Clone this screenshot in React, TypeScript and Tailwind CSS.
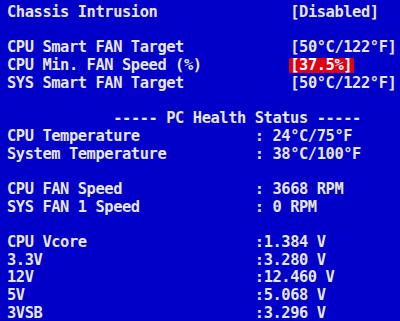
import React from 'react';

type Row =
  | { kind: 'blank' }
  | { kind: 'option'; label: string; value: string; active?: boolean }
  | { kind: 'reading'; label: string; value: string }
  | { kind: 'header'; text: string };

const rows: Row[] = [
  { kind: 'option', label: 'Chassis Intrusion', value: '[Disabled]' },
  { kind: 'blank' },
  { kind: 'option', label: 'CPU Smart FAN Target', value: '[50°C/122°F]' },
  { kind: 'option', label: 'CPU Min. FAN Speed (%)', value: '[37.5%]', active: true },
  { kind: 'option', label: 'SYS Smart FAN Target', value: '[50°C/122°F]' },
  { kind: 'blank' },
  { kind: 'header', text: '----- PC Health Status -----' },
  { kind: 'reading', label: 'CPU Temperature', value: ': 24°C/75°F' },
  { kind: 'reading', label: 'System Temperature', value: ': 38°C/100°F' },
  { kind: 'blank' },
  { kind: 'reading', label: 'CPU FAN Speed', value: ': 3668 RPM' },
  { kind: 'reading', label: 'SYS FAN 1 Speed', value: ': 0 RPM' },
  { kind: 'blank' },
  { kind: 'reading', label: 'CPU Vcore', value: ':1.384 V' },
  { kind: 'reading', label: '3.3V', value: ':3.280 V' },
  { kind: 'reading', label: '12V', value: ':12.460 V' },
  { kind: 'reading', label: '5V', value: ':5.068 V' },
  { kind: 'reading', label: '3VSB', value: ':3.296 V' },
];

// one text cell is 8.85px wide, one row 17.7px tall
function BiosRow({ row }: { row: Row }) {
  if (row.kind === 'blank') {
    return <div className="h-[17.7px]" />;
  }

  if (row.kind === 'header') {
    return (
      <div className="flex h-[17.7px] whitespace-pre">
        <span className="pl-[106.2px]">{row.text}</span>
      </div>
    );
  }

  if (row.kind === 'option') {
    return (
      <div className="flex h-[17.7px] items-center whitespace-pre">
        <span className="w-[283.2px] shrink-0">{row.label}</span>
        <span
          className={
            row.active
              ? 'bg-[#e00010] text-white leading-[15px] h-[15px] pl-[1px] pr-[2px] -ml-[1px]'
              : ''
          }
        >
          {row.value}
        </span>
      </div>
    );
  }

  return (
    <div className="flex h-[17.7px] whitespace-pre">
      <span className="w-[247.8px] shrink-0">{row.label}</span>
      <span>{row.value}</span>
    </div>
  );
}

export default function App() {
  return (
    <div className="w-[400px] h-[321px] overflow-hidden bg-[#0000c8] text-[#e6e6e6] pt-[4px] pl-[7px] text-[15.4px] tracking-[-0.42px] leading-[17.7px] font-bold font-['DejaVu_Sans_Mono',monospace]">
      {rows.map((row, i) => (
        <BiosRow key={i} row={row} />
      ))}
    </div>
  );
}
